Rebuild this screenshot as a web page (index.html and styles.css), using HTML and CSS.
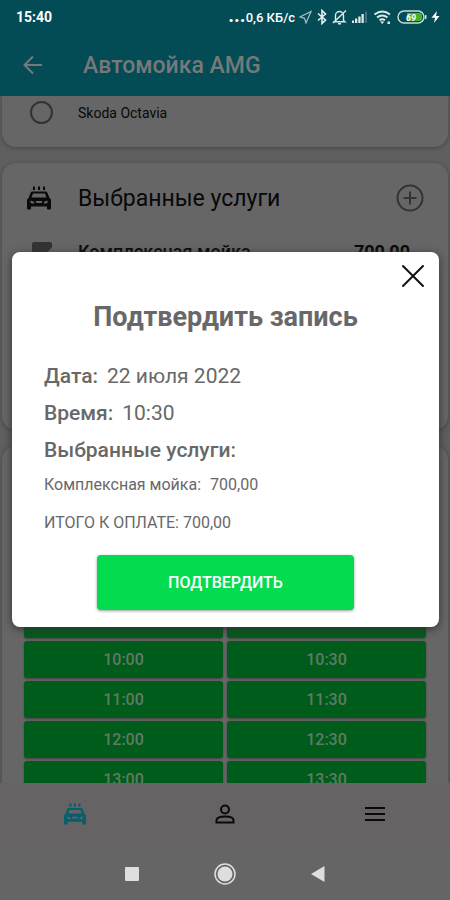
FILE: index.html
```html
<!DOCTYPE html>
<html lang="ru">
<head>
<meta charset="utf-8">
<meta name="viewport" content="width=device-width, initial-scale=1">
<title>Автомойка AMG</title>
<link rel="stylesheet" href="styles.css">
</head>
<body>
<svg class="defs" aria-hidden="true">
  <symbol id="carwash" viewBox="0 0 26 24">
    <path d="M7 0.500h2v3.500h-2zM12 0.500h2v3.500h-2zM17 0.500h2v3.500h-2z"/>
    <path fill-rule="evenodd" d="M6.500 5.500h13q1.500 0 2 1.400L23.500 12l1.500 1.600V22.500q0 1-1 1h-2q-1 0-1-1V20.500H5v2q0 1-1 1H2q-1 0-1-1V13.600L2.500 12l2-5.100q.5-1.400 2-1.400zM7 7.500 5.500 11.500h15L19 7.500zM4.500 14.500v2.500l4 .8-1-2.300zM21.500 14.500v2.500l-4 .8 1-2.300zM9.500 15l1 2h5l1-2z"/>
  </symbol>
</svg>
<div class="screen">
  <div class="status">
    <span class="clock">15:40</span>
    <div class="indicators">
      <span class="speed"><b class="dots">...</b>0,6 КБ/с</span>
      <svg width="13" height="14" viewBox="0 0 13 14" fill="none" stroke="#a5bfc4" stroke-width="1.200"><path d="M12 1.500 1 7l4.500 1.300L7 13z"/></svg>
      <svg width="12" height="16" viewBox="0 0 12 16" fill="none" stroke="#e6f0f1" stroke-width="1.600"><path d="M2 4.500 9.500 11 6 14.500v-13L9.500 5 2 11.500"/></svg>
      <svg width="15" height="16" viewBox="0 0 15 16" fill="none" stroke="#e0eaec" stroke-width="1.400"><path d="M3.500 11.500V6.500a4 4 0 0 1 8 0v5l1.500 1.300H2zM6 14.800h3M1 14 14 1.500"/></svg>
      <svg width="18" height="14" viewBox="0 0 18 14" fill="#dce8ea"><path d="M1 10.500h2V13H1zM4 8.500h2.300V13H4zM7.300 6.500h2.300V13H7.300zM10.500 4h2.300v9h-2.300z"/><path fill="#3d737b" d="M14 1.500h2V13h-2z"/></svg>
      <svg width="20" height="16" viewBox="0 0 20 16" fill="none" stroke="#dce8ea" stroke-width="2"><path d="M1.500 5.500q8-6 15.500 0M4 8.500q5.300-4 10.500 0M6.500 11.300q2.700-2 5.500 0"/><path fill="#dce8ea" stroke="none" d="m9.200 15-2-2.200q2-1.300 4 0zM14.500 12.500h2.500v2.500h-2.500z"/></svg>
      <svg width="30" height="14" viewBox="0 0 30 14"><rect x="1" y="1" width="26" height="12" rx="6" fill="#034b55" stroke="#c9dcdc" stroke-width="1.400"/><path fill="#42b51d" d="M10 3h13q2 0 2 2v4q0 2-2 2H10z"/><text x="9" y="10.500" class="charge">69</text><path fill="#c9dcdc" d="M28 5h1.500v4H28z"/></svg>
      <svg width="9" height="14" viewBox="0 0 9 14" fill="#fff"><path d="M6 1 .5 7.800H4L3 13l5.500-7H5z"/></svg>
    </div>
  </div>
  <header class="appbar">
    <button class="icon-btn" aria-label="Назад"><svg width="20" height="20" viewBox="0 0 20 20" fill="none" stroke="#75797a" stroke-width="2"><path d="M19 10H2M10 1.500 1.500 10l8.500 8.500"/></svg></button>
    <h1>Автомойка AMG</h1>
  </header>
  <main class="content">
    <section class="card cars">
      <label class="choice"><input type="radio" name="car" class="radio"><span>Skoda Octavia</span></label>
    </section>
    <section class="card services">
      <div class="card-head">
        <svg class="head-icon" width="26" height="24" fill="#0a0a0a"><use href="#carwash"/></svg>
        <h2>Выбранные услуги</h2>
        <button class="icon-btn" aria-label="Добавить услугу"><svg width="28" height="28" viewBox="0 0 28 28" fill="none" stroke="#333" stroke-width="2"><circle cx="14" cy="14" r="12.500"/><path d="M14 7.500v13M7.500 14h13"/></svg></button>
      </div>
      <label class="service"><input type="checkbox" class="check" checked><span>Комплексная мойка</span><b>700,00</b></label>
    </section>
    <section class="card times">
      <div class="slots">
        <button class="slot">09:00</button><button class="slot">09:30</button>
        <button class="slot">10:00</button><button class="slot">10:30</button>
        <button class="slot">11:00</button><button class="slot">11:30</button>
        <button class="slot">12:00</button><button class="slot">12:30</button>
        <button class="slot">13:00</button><button class="slot">13:30</button>
      </div>
    </section>
  </main>
  <nav class="tabs">
    <a href="#wash" aria-label="Мойка"><svg width="24" height="22" fill="#075e6c"><use href="#carwash"/></svg></a>
    <a href="#profile" aria-label="Профиль"><svg width="20" height="20" viewBox="0 0 20 20" fill="none" stroke="#0a0a0a" stroke-width="2"><circle cx="10" cy="5.500" r="4"/><path d="M1.500 18.500v-2.300q0-3.700 8.500-3.700t8.500 3.700v2.300z"/></svg></a>
    <a href="#menu" aria-label="Меню"><svg width="22" height="16" viewBox="0 0 22 16" stroke="#0a0a0a" stroke-width="2"><path d="M1 2h20M1 8h20M1 14h20"/></svg></a>
  </nav>
  <div class="sysnav">
    <button class="icon-btn" aria-label="Недавние"><svg width="16" height="16" viewBox="0 0 16 16"><rect x="1" y="1" width="14" height="14" rx="1" fill="#dedede"/></svg></button>
    <button class="icon-btn" aria-label="Домой"><svg width="22" height="22" viewBox="0 0 22 22"><circle cx="11" cy="11" r="10" fill="none" stroke="#dedede" stroke-width="1.500"/><circle cx="11" cy="11" r="7.500" fill="#dedede"/></svg></button>
    <button class="icon-btn" aria-label="Назад в систему"><svg width="16" height="16" viewBox="0 0 16 16"><path d="M14.500 0v16L1 8z" fill="#dedede"/></svg></button>
  </div>
  <div class="overlay">
    <div class="dialog" role="dialog" aria-labelledby="dialog-title">
      <button class="icon-btn close" aria-label="Закрыть"><svg width="24" height="24" viewBox="0 0 24 24" stroke="#111" stroke-width="2" stroke-linecap="round"><path d="M2 2l20 20M22 2 2 22"/></svg></button>
      <h2 id="dialog-title">Подтвердить запись</h2>
      <p class="line"><b>Дата:</b><span>22 июля 2022</span></p>
      <p class="line"><b>Время:</b><span>10:30</span></p>
      <p class="line"><b>Выбранные услуги:</b></p>
      <p class="item"><span>Комплексная мойка:</span><span>700,00</span></p>
      <p class="total">ИТОГО К ОПЛАТЕ: 700,00</p>
      <button class="confirm">ПОДТВЕРДИТЬ</button>
    </div>
  </div>
</div>
</body>
</html>
```
FILE: styles.css
```css
* { box-sizing: border-box; }
body { margin: 0; font-family: Roboto, "Liberation Sans", sans-serif; color: #080808; }
h1, h2, p { margin: 0; }
button { font: inherit; border: 0; padding: 0; cursor: pointer; }
svg { display: block; flex: none; }
.defs { position: absolute; width: 0; height: 0; }
.icon-btn { background: none; display: flex; align-items: center; justify-content: center; }

.screen { position: relative; display: flex; flex-direction: column; height: 100vh; overflow: hidden; background: #5f5f5f; }

.status { display: flex; align-items: center; justify-content: space-between; height: 34px; padding: 0 10px 0 16px; background: #034b55; color: #fff; }
.clock { font-size: 14px; font-weight: 700; }
.indicators { display: flex; align-items: center; gap: 4px; }
.speed { font-size: 13px; font-weight: 500; }
.dots { font-size: 20px; line-height: 12px; }
.charge { font-size: 9px; font-weight: 700; font-style: italic; fill: #fff; }

.appbar { display: flex; align-items: center; gap: 40px; height: 62px; padding: 0 23px; background: #034b55; color: #75797a; }
.appbar h1 { font-size: 23px; font-weight: 500; }

.content { flex: 1; min-height: 0; overflow: hidden; padding: 0 2px; }
.card { background: #666; border-radius: 14px; box-shadow: 0 1px 4px #444; margin-bottom: 16px; }
.cars { height: 51px; padding: 5px 28px; border-radius: 0 0 14px 14px; }
.choice { display: flex; align-items: center; gap: 25px; font-size: 14px; }
.radio { appearance: none; width: 23px; height: 23px; margin: 0; border: 2px solid #333; border-radius: 50%; }
.services { height: 267px; padding: 21px 24px; }
.card-head { display: flex; align-items: center; gap: 26px; }
.card-head h2 { flex: 1; font-size: 23px; font-weight: 400; }
.service { display: flex; align-items: center; gap: 26px; padding: 30px 14px 0 6px; font-size: 18px; line-height: 20px; font-weight: 500; }
.service span { flex: 1; }
.check { appearance: none; width: 20px; height: 20px; margin: 0; border-radius: 2px; background: linear-gradient(135deg, #333 65%, #666 65%, #666 75%, #333 75%); }

.times { padding: 155px 22px 22px; }
.slots { display: grid; grid-template-columns: 1fr 1fr; gap: 3px 4px; }
.slot { height: 37px; border-radius: 3px; background: #005c1b; color: #617a65; font-size: 16px; font-weight: 500; box-shadow: 0 1px 2px #444; }

.tabs { display: grid; grid-template-columns: repeat(3, 1fr); height: 65px; padding-bottom: 3px; background: #656364; }
.tabs a { display: flex; align-items: center; justify-content: center; }
.sysnav { display: flex; align-items: center; justify-content: center; gap: 74px; height: 52px; background: #656565; }

.overlay { position: absolute; inset: 0 11px 21px 12px; display: flex; align-items: center; }
.dialog { position: relative; flex: 1; display: flex; flex-direction: column; padding: 48px 32px 17px; border-radius: 8px; background: #fff; color: #686868; box-shadow: 0 2px 8px #333; }
.close { position: absolute; top: 12px; right: 14px; }
.dialog h2 { margin-bottom: 24px; text-align: center; font-size: 27px; line-height: 34px; font-weight: 700; }
.line { display: flex; gap: 9px; font-size: 21px; line-height: 37px; }
.line b { font-weight: 500; }
.item, .total { display: flex; gap: 9px; font-size: 16px; line-height: 32px; }
.total { margin-top: 6px; }
.confirm { align-self: center; width: 257px; height: 55px; margin-top: 16px; border-radius: 4px; background: #02dc4e; color: #fff; font-size: 16px; font-weight: 500; box-shadow: 0 1px 3px #999; }
```
